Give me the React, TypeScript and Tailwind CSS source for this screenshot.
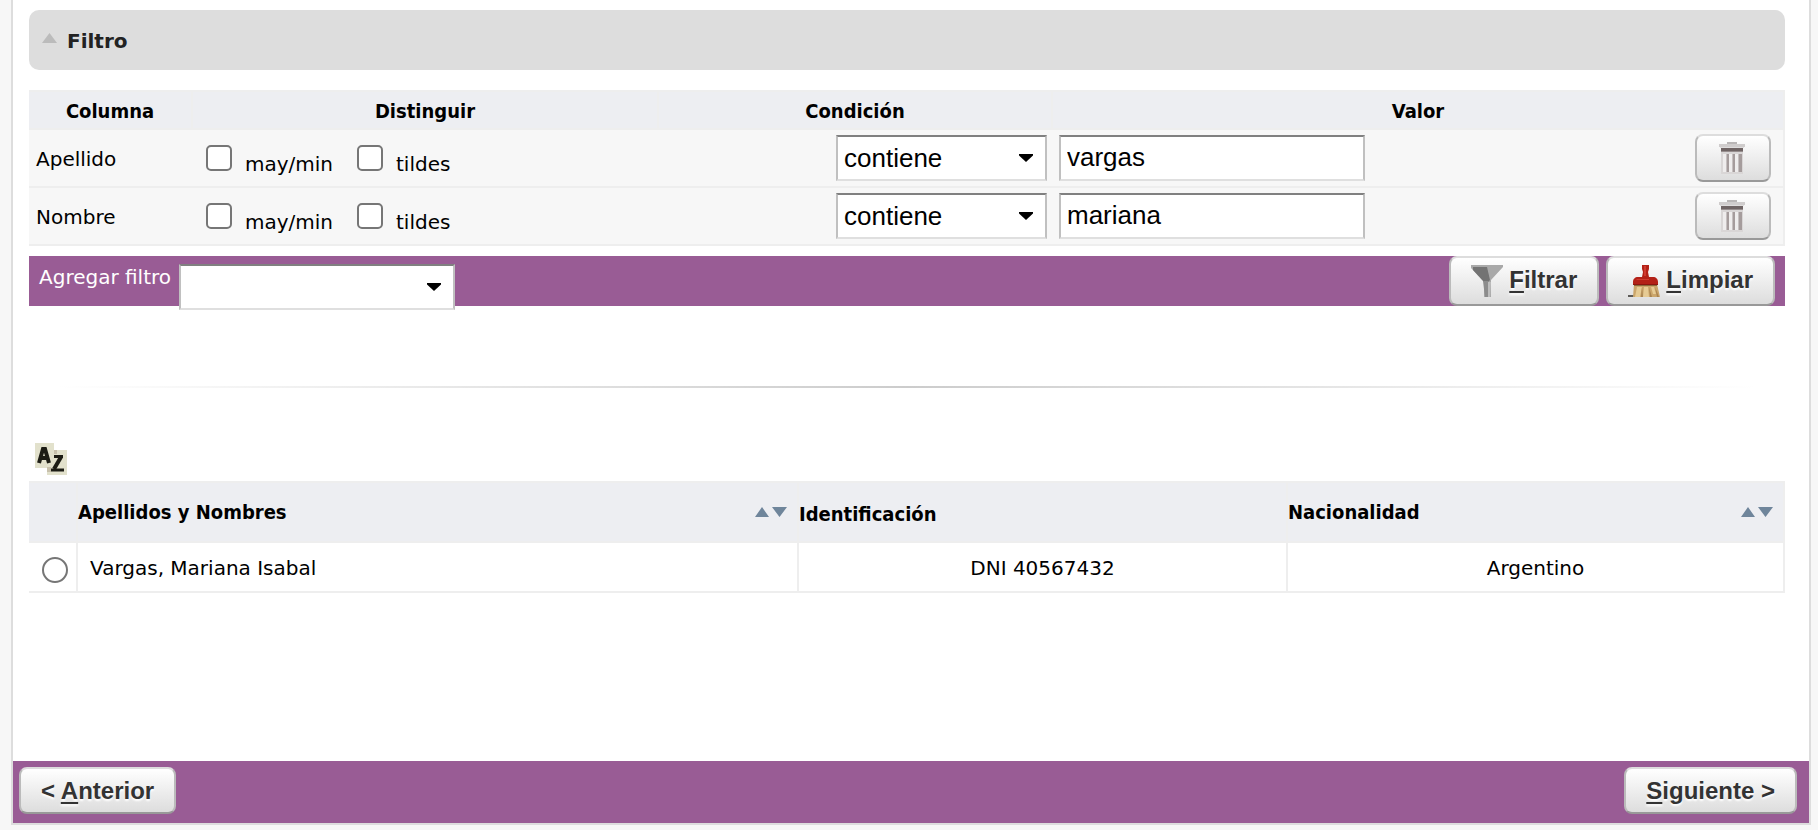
import { useState } from "react";
import clsx from "clsx";

const FIELD =
  "appearance-none border-2 border-t-[#808080] border-x-[#c0c0c0] border-b-[#dfdfdf] bg-white font-['Liberation_Sans',Arial,sans-serif] text-[26px] leading-[30px] text-black";

const BUTTON =
  "inline-flex items-center justify-center rounded-lg border-2 border-t-[#dddddd] border-x-[#bbbbbb] border-b-[#999999] bg-linear-to-b from-white to-[#dddddd] font-['Liberation_Sans',Arial,sans-serif] text-2xl font-bold text-[#333333] text-shadow-[0_2px_2px_#ffffff]";

const HEADING = "font-['DejaVu_Sans_Condensed','DejaVu_Sans',sans-serif] font-bold";

const filters = [
  { column: "Apellido", value: "vargas" },
  { column: "Nombre", value: "mariana" },
];

const people = [
  { name: "Vargas, Mariana Isabal", document: "DNI 40567432", nationality: "Argentino" },
];

export default function App() {
  return (
    <div className="min-h-screen bg-[#f7f7f7] pr-[7px] pb-[5px] pl-[11px] font-['DejaVu_Sans',Verdana,sans-serif] text-xl leading-6 text-black">
      <main className="flex min-h-[825px] flex-col border-2 border-t-0 border-[#dddddd] bg-white">
        <div className="flex-1 pt-[10px] pr-6 pb-10 pl-4">
          <FilterPanel />
          <hr className="mx-7 mt-20 h-[2px] border-0 bg-linear-to-r from-transparent via-[#cccccc] to-transparent" />
          <Results />
        </div>

        <footer className="flex items-start justify-between bg-[#995c95] pt-[6px] pr-3 pb-[9px] pl-[6px]">
          <button type="button" className={clsx(BUTTON, "h-[47px] px-5")}>
            <span>
              &lt; <Key>A</Key>nterior
            </span>
          </button>
          <button type="button" className={clsx(BUTTON, "h-[47px] px-5")}>
            <span>
              <Key>S</Key>iguiente &gt;
            </span>
          </button>
        </footer>
      </main>
    </div>
  );
}

function FilterPanel() {
  return (
    <section>
      <h2>
        <button
          type="button"
          className="flex h-[60px] w-full items-center gap-[10px] rounded-[10px] bg-[#dddddd] px-3 pt-[2px] text-left font-bold text-[#222222]"
        >
          <svg viewBox="0 0 16 16" className="size-4 fill-[#bbbbbb]">
            <path d="M8.500 0 16 10H1z" />
          </svg>
          Filtro
        </button>
      </h2>

      <table className="mt-5 w-full table-fixed border-separate border-spacing-0">
        <colgroup>
          <col className="w-[164px]" />
          <col className="w-[466px]" />
          <col className="w-[394px]" />
          <col />
        </colgroup>
        <thead>
          <tr className="h-10">
            {["Columna", "Distinguir", "Condición", "Valor"].map((title) => (
              <th
                key={title}
                className={clsx(
                  HEADING,
                  "border-y-2 border-r-2 border-[#eeeeee] bg-[#edeef2] p-0 pt-[2px]",
                )}
              >
                {title}
              </th>
            ))}
          </tr>
        </thead>
        <tbody>
          {filters.map((filter) => (
            <FilterRow key={filter.column} column={filter.column} initial={filter.value} />
          ))}
        </tbody>
      </table>

      <div className="mt-[10px] flex h-[50px] items-start bg-[#995c95] px-[10px]">
        <label htmlFor="add-filter" className="pt-[9px] text-white">
          Agregar filtro
        </label>
        <Dropdown id="add-filter" className="mt-2 ml-2 w-[276px]" options={["", "Apellido", "Nombre"]} />
        <div className="ml-auto flex gap-[7px]">
          <button type="button" className={clsx(BUTTON, "h-[50px] gap-[6px] px-5")}>
            <FunnelIcon />
            <span className="pb-[2px]">
              <Key>F</Key>iltrar
            </span>
          </button>
          <button type="button" className={clsx(BUTTON, "h-[50px] gap-[6px] px-5")}>
            <BroomIcon />
            <span className="pb-[2px]">
              <Key>L</Key>impiar
            </span>
          </button>
        </div>
      </div>
    </section>
  );
}

function FilterRow({ column, initial }: { column: string; initial: string }) {
  const [value, setValue] = useState(initial);
  const cell = "border-b-2 border-[#eeeeee] bg-[#f7f7f7] p-0";

  return (
    <tr className="h-[58px]">
      <td className={clsx(cell, "pt-[2px] pl-[7px]")}>{column}</td>
      <td className={cell}>
        <div className="flex gap-6 pl-[13px]">
          <Check label="may/min" />
          <Check label="tildes" />
        </div>
      </td>
      <td className={clsx(cell, "pr-[6px]")}>
        <Dropdown
          label={`Condición de ${column}`}
          className="ml-auto w-[211px]"
          options={["contiene", "no contiene", "es igual a"]}
        />
      </td>
      <td className={clsx(cell, "border-r-2")}>
        <div className="flex items-center justify-between pr-3 pl-[6px]">
          <input
            type="text"
            aria-label={`Valor de ${column}`}
            value={value}
            onChange={(e) => setValue(e.target.value)}
            className={clsx(FIELD, "h-[46px] w-[306px] px-[6px] pb-[2px]")}
          />
          <button type="button" aria-label={`Quitar ${column}`} className={clsx(BUTTON, "h-12 w-[76px]")}>
            <TrashIcon />
          </button>
        </div>
      </td>
    </tr>
  );
}

function Check({ label }: { label: string }) {
  return (
    <label className="flex items-center gap-[13px]">
      <input
        type="checkbox"
        className="size-[26px] appearance-none rounded-[5px] border-2 border-[#767676] bg-white checked:bg-[#767676]"
      />
      <span className="pt-3">{label}</span>
    </label>
  );
}

function Dropdown({
  id,
  label,
  options,
  className,
}: {
  id?: string;
  label?: string;
  options: string[];
  className?: string;
}) {
  return (
    <div className={clsx("relative", className)}>
      <select id={id} aria-label={label} className={clsx(FIELD, "block h-[46px] w-full px-[6px]")}>
        {options.map((option) => (
          <option key={option}>{option}</option>
        ))}
      </select>
      <svg
        viewBox="0 0 14 8"
        className="pointer-events-none absolute top-[19px] right-[14px] h-2 w-[14px] fill-black"
      >
        <path d="M0 0h14v1.400L7 8 0 1.400z" />
      </svg>
    </div>
  );
}

function Results() {
  const cell = "border-r-2 border-b-2 border-[#eeeeee] p-0";
  const head = clsx(HEADING, "border-y-2 border-r-2 border-[#eeeeee] bg-[#edeef2] p-0 text-left");

  return (
    <section className="pt-[55px]">
      <button type="button" aria-label="Ordenar" className="ml-[6px] block">
        <SortAzIcon />
      </button>

      <table className="mt-[6px] w-full table-fixed border-separate border-spacing-0">
        <colgroup>
          <col className="w-[49px]" />
          <col className="w-[721px]" />
          <col className="w-[489px]" />
          <col />
        </colgroup>
        <thead>
          <tr className="h-[62px]">
            <th className={head} />
            <th className={head}>
              <SortableTitle title="Apellidos y Nombres" />
            </th>
            <th className={clsx(head, "pt-[3px]")}>Identificación</th>
            <th className={head}>
              <SortableTitle title="Nacionalidad" />
            </th>
          </tr>
        </thead>
        <tbody>
          {people.map((person) => (
            <tr key={person.document} className="h-[50px]">
              <td className={cell}>
                <input
                  type="radio"
                  name="person"
                  aria-label={person.name}
                  className="mt-[6px] ml-[13px] block size-[26px] appearance-none rounded-full border-2 border-[#767676] bg-white checked:border-8"
                />
              </td>
              <td className={clsx(cell, "pt-[2px] pl-3")}>{person.name}</td>
              <td className={clsx(cell, "pt-[2px] text-center")}>{person.document}</td>
              <td className={clsx(cell, "pt-[2px] text-center")}>{person.nationality}</td>
            </tr>
          ))}
        </tbody>
      </table>
    </section>
  );
}

function SortableTitle({ title }: { title: string }) {
  return (
    <div className="flex items-center justify-between pr-[10px]">
      {title}
      <button type="button" aria-label={`Ordenar por ${title}`}>
        <svg viewBox="0 0 32 10" className="h-[10px] w-8 fill-[#6f859b]">
          <path d="M7 0 14 10H0zM17 0h15l-7.500 10z" />
        </svg>
      </button>
    </div>
  );
}

// Underlined access key inside a button label
function Key({ children }: { children: React.ReactNode }) {
  return <span className="underline decoration-2 underline-offset-[3px]">{children}</span>;
}

function TrashIcon() {
  return (
    <svg viewBox="0 0 32 32" className="size-8">
      <path fill="#b9b6b6" d="M10 0h10v2H10z" />
      <path fill="#cfcccc" d="M2 2h26v3H2z" />
      <path fill="#dedcdc" d="M3 5h24v1H3z" />
      <path fill="#6f6464" d="M4 6h22v3H4z" />
      <path fill="#978e8e" d="M4 9h22v1H4z" />
      <path fill="#d9d6d6" d="M4 10h22v22H4z" />
      <path fill="#efeded" d="M6 12h4v18H6zM12 12h4v18h-4zM18 12h3v18h-3z" />
      <path fill="#a59c9c" d="M10 12h2v18h-2zM16 12h2v18h-2zM22 12h3v18h-3z" />
      <path fill="#c6c0c0" d="M9 12h1v18H9zM15 12h1v18h-1zM21 12h1v18h-1z" />
    </svg>
  );
}

function FunnelIcon() {
  return (
    <svg viewBox="0 0 32 32" className="size-8">
      <path fill="#a9a9a9" d="M0 0h32v2L20 15v17h-7V17L0 3z" />
      <path fill="#737373" d="M2 2h14l3 13-2 2h-4L2 5z" />
      <path fill="#8c8c8c" d="M12 16h5v16h-3z" />
      <path fill="#bdbdbd" d="M17 17h3l-1 15h-2z" />
    </svg>
  );
}

function BroomIcon() {
  return (
    <svg viewBox="0 0 32 32" className="size-8">
      <path fill="#5e5c58" d="M0 30h8v2H0z" />
      <path fill="#cba66b" d="M6 19h23l3 13H5z" />
      <path fill="#8a6a3c" d="M6 19h23v2H6z" />
      <path fill="#e6cb94" d="M9 22h5l-2 10H7zM16 22h4l1 10h-6zM23 22h3l2 7h-3z" />
      <path fill="#a98450" d="m14 22 1 10h-2zM21 22l3 10h-2zM27 22l4 10h-2z" />
      <path fill="#b32117" d="M14 0h7v4l-1 3 1 5h4c3 0 5 2 5 5v3H5v-3c0-3 2-5 5-5h4l1-5-1-3z" />
      <path fill="#cf3a2e" d="M16 1h2v10h-2zM9 14h12v1H8z" />
      <path fill="#8c170f" d="M5 19h25v1H5z" />
    </svg>
  );
}

function SortAzIcon() {
  return (
    <svg viewBox="0 0 32 32" className="size-8">
      <path fill="#e2e1cc" d="M0 0h19v7h13v25H12v-7H0z" />
      <path fill="#c7c0ab" d="M19 7h3v4h-3zM12 24h4v5h-4z" />
      <path fill="none" stroke="#1c1c14" strokeWidth="4" d="m4 20 4-14h2l4 14M6 15h7" />
      <path fill="none" stroke="#1c1c14" strokeWidth="3" d="M19 13.500h9M16 27h13" />
      <path fill="none" stroke="#1c1c14" strokeWidth="4" d="M26 14 19 26" />
    </svg>
  );
}
